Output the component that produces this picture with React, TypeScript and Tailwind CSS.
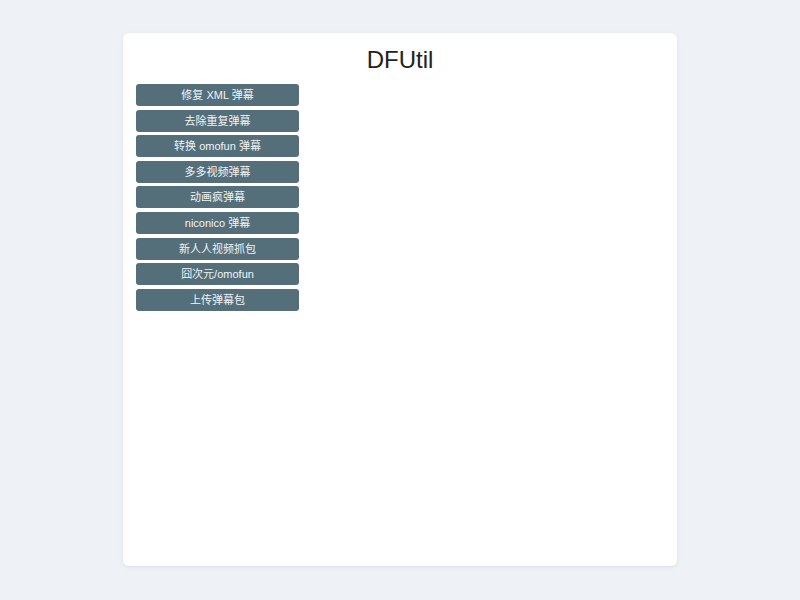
import React from 'react';

const actions = [
  '修复 XML 弹幕',
  '去除重复弹幕',
  '转换 omofun 弹幕',
  '多多视频弹幕',
  '动画疯弹幕',
  'niconico 弹幕',
  '新人人视频抓包',
  '囧次元/omofun',
  '上传弹幕包',
];

export default function App() {
  return (
    <div className="min-h-[600px] w-full bg-[#eef1f6] pt-[33px] font-['Liberation_Sans','Noto_Sans_CJK_SC',sans-serif]">
      <div className="mx-auto h-[533px] w-[554px] rounded-[6px] bg-white px-[13px] pt-[13px] shadow-[0_1px_4px_rgba(0,0,0,0.08)]">
        <h1 className="mb-[10px] text-center text-[24px] leading-[28px] text-[#222]">DFUtil</h1>
        <div className="flex w-[163px] flex-col gap-[3.6px]">
          {actions.map((label) => (
            <button
              key={label}
              className="h-[22px] rounded-[3px] bg-[#546e7a] text-[11px] leading-[22px] text-[#f2f4f5]"
            >
              {label}
            </button>
          ))}
        </div>
      </div>
    </div>
  );
}
